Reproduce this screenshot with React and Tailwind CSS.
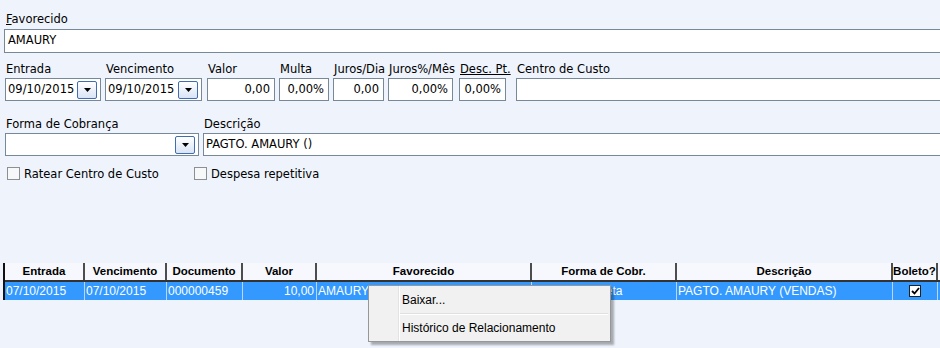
import React from "react";

const ComboButton = () => (
  <div className="mr-[3px] flex h-[18px] w-[20px] shrink-0 items-center justify-center rounded-[2px] border border-[#3f6db0] bg-gradient-to-b from-[#ffffff] to-[#d9e4f6]">
    <svg width="7" height="4" viewBox="0 0 7 4">
      <path d="M0 0h7L3.5 4z" fill="#000" />
    </svg>
  </div>
);

const Field = ({ label, width, ml, children, align = "left", combo = false }) => (
  <div className="flex shrink-0 flex-col" style={{ marginLeft: ml, width }}>
    <div className="h-[14px] whitespace-nowrap pl-[1px] leading-[14px]">{label}</div>
    <div
      className={`mt-[2px] flex h-[23px] items-center border border-[#778899] bg-white ${
        align === "right" ? "justify-end pr-[4px]" : "justify-between pl-[2px]"
      }`}
    >
      <span className="whitespace-nowrap">{children}</span>
      {combo && <ComboButton />}
    </div>
  </div>
);

const Checkbox = ({ label, width }) => (
  <div className="flex h-[13px] shrink-0 items-center" style={{ width }}>
    <div className="h-[13px] w-[13px] border border-[#8e8f8f] bg-[#f7f8fa]" />
    <span className="ml-[4px] whitespace-nowrap leading-[14px]">{label}</span>
  </div>
);

const columns = [
  { title: "Entrada", w: 80, value: "07/10/2015" },
  { title: "Vencimento", w: 82, value: "07/10/2015" },
  { title: "Documento", w: 76, value: "000000459" },
  { title: "Valor", w: 74, value: "10,00", right: true },
  { title: "Favorecido", w: 215, value: "AMAURY" },
  { title: "Forma de Cobr.", w: 145, value: "Cobrança Boleta" },
  { title: "Descrição", w: 216, value: "PAGTO. AMAURY (VENDAS)" },
  { title: "Boleto?", w: 45, check: true },
];

export default function App() {
  return (
    <div className="relative h-[348px] w-[940px] overflow-hidden bg-[#eef3fc] font-['DejaVu_Sans',sans-serif] text-[11.5px] text-black">
      <div className="pt-[12px]">
        {/* Favorecido */}
        <div className="h-[14px] pl-[6px] leading-[14px]">
          <span className="underline">F</span>avorecido
        </div>
        <div className="ml-[4px] mt-[3px] flex h-[24px] w-[960px] items-center border border-[#778899] bg-white pl-[3px]">
          AMAURY
        </div>

        {/* Entrada ... Centro de Custo */}
        <div className="mt-[9px] flex w-[1400px]">
          <Field label="Entrada" width={96} ml={5} combo>09/10/2015</Field>
          <Field label="Vencimento" width={97} ml={4} combo>09/10/2015</Field>
          <Field label="Valor" width={68} ml={5} align="right">0,00</Field>
          <Field label="Multa" width={50} ml={4} align="right">0,00%</Field>
          <Field label="Juros/Dia" width={51} ml={4} align="right">0,00</Field>
          <Field label="Juros%/Mês" width={65} ml={4} align="right">0,00%</Field>
          <Field label={<span className="underline">Desc. Pt.</span>} width={47} ml={6} align="right">0,00%</Field>
          <Field label="Centro de Custo" width={500} ml={10}>{""}</Field>
        </div>

        {/* Forma de Cobrança / Descrição */}
        <div className="mt-[16px] flex w-[1400px]">
          <Field label="Forma de Cobrança" width={194} ml={5} combo>{""}</Field>
          <Field label="Descrição" width={800} ml={4}>PAGTO. AMAURY ()</Field>
        </div>

        {/* Checkboxes */}
        <div className="mt-[11px] flex pl-[7px]">
          <Checkbox label="Ratear Centro de Custo" width={187} />
          <Checkbox label="Despesa repetitiva" />
        </div>

        {/* Grid */}
        <div className="mt-[83px] ml-[3px] border-l-2 border-[#111]">
          <div className="flex h-[19px] border-b-2 border-[#333] bg-[#f6f8fd] font-['Liberation_Sans',sans-serif] text-[11.5px] font-bold">
            {columns.map((c) => (
              <div
                key={c.title}
                className="flex shrink-0 items-center justify-center border-r-2 border-[#4d4d4d] leading-none"
                style={{ width: c.w }}
              >
                {c.title}
              </div>
            ))}
          </div>
          <div className="flex h-[18px] bg-[#3399ff] font-['Liberation_Sans',sans-serif] text-[12px] text-white">
            {columns.map((c) => (
              <div
                key={c.title}
                className={`flex shrink-0 items-center overflow-hidden whitespace-nowrap border-r border-[#b9d6f7] ${
                  c.right ? "justify-end pr-[2px]" : c.check ? "justify-center" : "pl-[1px]"
                }`}
                style={{ width: c.w }}
              >
                {c.check ? (
                  <div className="flex h-[12px] w-[12px] items-center justify-center border border-[#222] bg-white">
                    <svg width="9" height="8" viewBox="0 0 9 8">
                      <path d="M1 4l2.5 2.5L8 1" fill="none" stroke="#000" strokeWidth="1.8" />
                    </svg>
                  </div>
                ) : (
                  c.value
                )}
              </div>
            ))}
            <div className="flex-1" />
          </div>
        </div>
      </div>

      {/* Context menu */}
      <div className="absolute left-[368px] top-[285px] flex h-[57px] w-[243px] border border-[#979797] bg-[#f1f1f1] font-['Liberation_Sans',sans-serif] text-[12px] text-black shadow-[3px_3px_2px_rgba(0,0,0,0.3)]">
        <div className="w-[30px] border-r border-[#e2e3e3] shadow-[1px_0_0_#ffffff]" />
        <div className="flex flex-1 flex-col pr-[2px]">
          <div className="flex h-[27px] items-center pl-[3px]">Baixar...</div>
          <div className="ml-[1px] h-[2px] border-t border-b border-t-[#e0e0e0] border-b-white" />
          <div className="flex h-[26px] items-center pl-[3px]">Histórico de Relacionamento</div>
        </div>
      </div>
    </div>
  );
}
